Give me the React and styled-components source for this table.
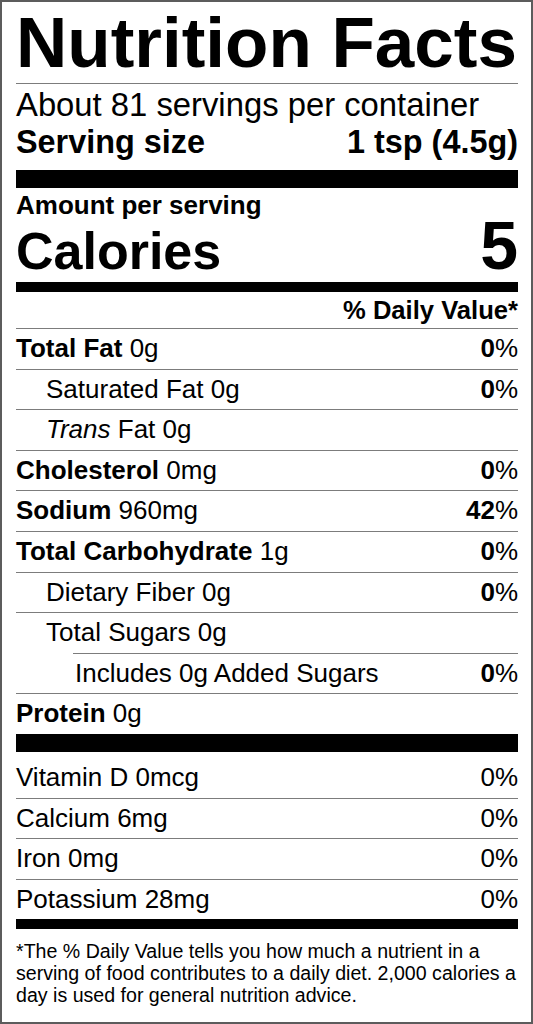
import React from 'react';
import styled, { createGlobalStyle } from 'styled-components';

const GlobalStyle = createGlobalStyle`
  body {
    margin: 0;
    background: #fff;
  }
`;

const Label = styled.section`
  box-sizing: border-box;
  width: 533px;
  height: 1024px;
  border: 2px solid #5c5c5c;
  padding: 1px 13px 0 14px;
  display: flex;
  flex-direction: column;
  font-family: "Liberation Sans", Arial, sans-serif;
  color: #000;
`;

const Title = styled.h1`
  margin: 0;
  font-size: 71px;
  line-height: 80px;
  font-weight: 700;
  white-space: nowrap;
`;

const Rule = styled.div`
  flex-shrink: 0;
  height: ${({ $size }) => $size || 1}px;
  margin-left: ${({ $indent }) => $indent || 0}px;
  margin-top: ${({ $gap }) => $gap || 0}px;
  background: ${({ $size }) => ($size > 1 ? '#000' : '#7c7c7c')};
`;

const Servings = styled.div`
  padding-top: 3.4px;
  font-size: 32.8px;
  line-height: 35px;
  white-space: nowrap;
`;

const ServingRow = styled.div`
  display: flex;
  justify-content: space-between;
  margin-top: 2.5px;
  font-size: 32.4px;
  font-weight: 700;
`;

const Amount = styled.div`
  padding-top: 2px;
  font-size: 26px;
  line-height: 30px;
  font-weight: 700;
`;

const CaloriesRow = styled.div`
  display: flex;
  justify-content: space-between;
  align-items: baseline;
  font-weight: 700;
`;

const Calories = styled.span`
  font-size: 52px;
  line-height: 62px;
`;

const CalorieCount = styled.span`
  font-size: 68px;
  line-height: 50px;
`;

const DailyHead = styled.div`
  text-align: right;
  font-size: 25.6px;
  line-height: 36px;
  font-weight: 700;
`;

const Row = styled.div`
  display: flex;
  justify-content: space-between;
  height: 39.6px;
  line-height: 39.6px;
  padding-top: ${({ $top }) => $top || 0}px;
  padding-left: ${({ $indent }) => $indent || 0}px;
  font-size: 26px;
  white-space: nowrap;
`;

const Pct = styled.span`
  & b {
    font-weight: 700;
  }
`;

const Footnote = styled.p`
  margin: 0;
  padding-top: 11px;
  font-size: 19.6px;
  line-height: 22px;
`;

const nutrients = [
  { name: 'Total Fat', amount: '0g', pct: '0', bold: true },
  { name: 'Saturated Fat', amount: '0g', pct: '0', indent: 30 },
  { name: 'Trans', tail: ' Fat', amount: '0g', indent: 30, italic: true },
  { name: 'Cholesterol', amount: '0mg', pct: '0', bold: true },
  { name: 'Sodium', amount: '960mg', pct: '42', bold: true },
  { name: 'Total Carbohydrate', amount: '1g', pct: '0', bold: true },
  { name: 'Dietary Fiber', amount: '0g', pct: '0', indent: 30 },
  { name: 'Total Sugars', amount: '0g', indent: 30, ruleIndent: 57 },
  { name: 'Includes', amount: '0g Added Sugars', pct: '0', indent: 59 },
];

const vitamins = [
  { name: 'Vitamin D', amount: '0mcg', pct: '0%' },
  { name: 'Calcium', amount: '6mg', pct: '0%' },
  { name: 'Iron', amount: '0mg', pct: '0%' },
  { name: 'Potassium', amount: '28mg', pct: '0%' },
];

function NutrientName({ item }) {
  if (item.italic) {
    return (
      <span>
        <i>{item.name}</i>
        {item.tail} {item.amount}
      </span>
    );
  }
  if (item.bold) {
    return (
      <span>
        <b>{item.name}</b> {item.amount}
      </span>
    );
  }
  return (
    <span>
      {item.name} {item.amount}
    </span>
  );
}

export default function App() {
  return (
    <>
      <GlobalStyle />
      <Label>
        <Title>Nutrition Facts</Title>
        <Rule />
        <Servings>
          <div>About 81 servings per container</div>
          <ServingRow>
            <span>Serving size</span>
            <span>1 tsp (4.5g)</span>
          </ServingRow>
        </Servings>
        <Rule $size={18} $gap={10.1} />
        <Amount>Amount per serving</Amount>
        <CaloriesRow>
          <Calories>Calories</Calories>
          <CalorieCount>5</CalorieCount>
        </CaloriesRow>
        <Rule $size={10} />
        <DailyHead>% Daily Value*</DailyHead>
        <Rule />
        {nutrients.map((item) => (
          <React.Fragment key={item.name}>
            <Row $indent={item.indent}>
              <NutrientName item={item} />
              {item.pct && (
                <Pct>
                  <b>{item.pct}</b>%
                </Pct>
              )}
            </Row>
            <Rule $indent={item.ruleIndent} />
          </React.Fragment>
        ))}
        <Row>
          <span>
            <b>Protein</b> 0g
          </span>
        </Row>
        <Rule $size={18} />
        {vitamins.map((item, i) => (
          <React.Fragment key={item.name}>
            <Row $top={i === 0 ? 6 : 0}>
              <span>
                {item.name} {item.amount}
              </span>
              <span>{item.pct}</span>
            </Row>
            {i < vitamins.length - 1 && <Rule />}
          </React.Fragment>
        ))}
        <Rule $size={10} />
        <Footnote>
          *The % Daily Value tells you how much a nutrient in a serving of food
          contributes to a daily diet. 2,000 calories a day is used for general
          nutrition advice.
        </Footnote>
      </Label>
    </>
  );
}
